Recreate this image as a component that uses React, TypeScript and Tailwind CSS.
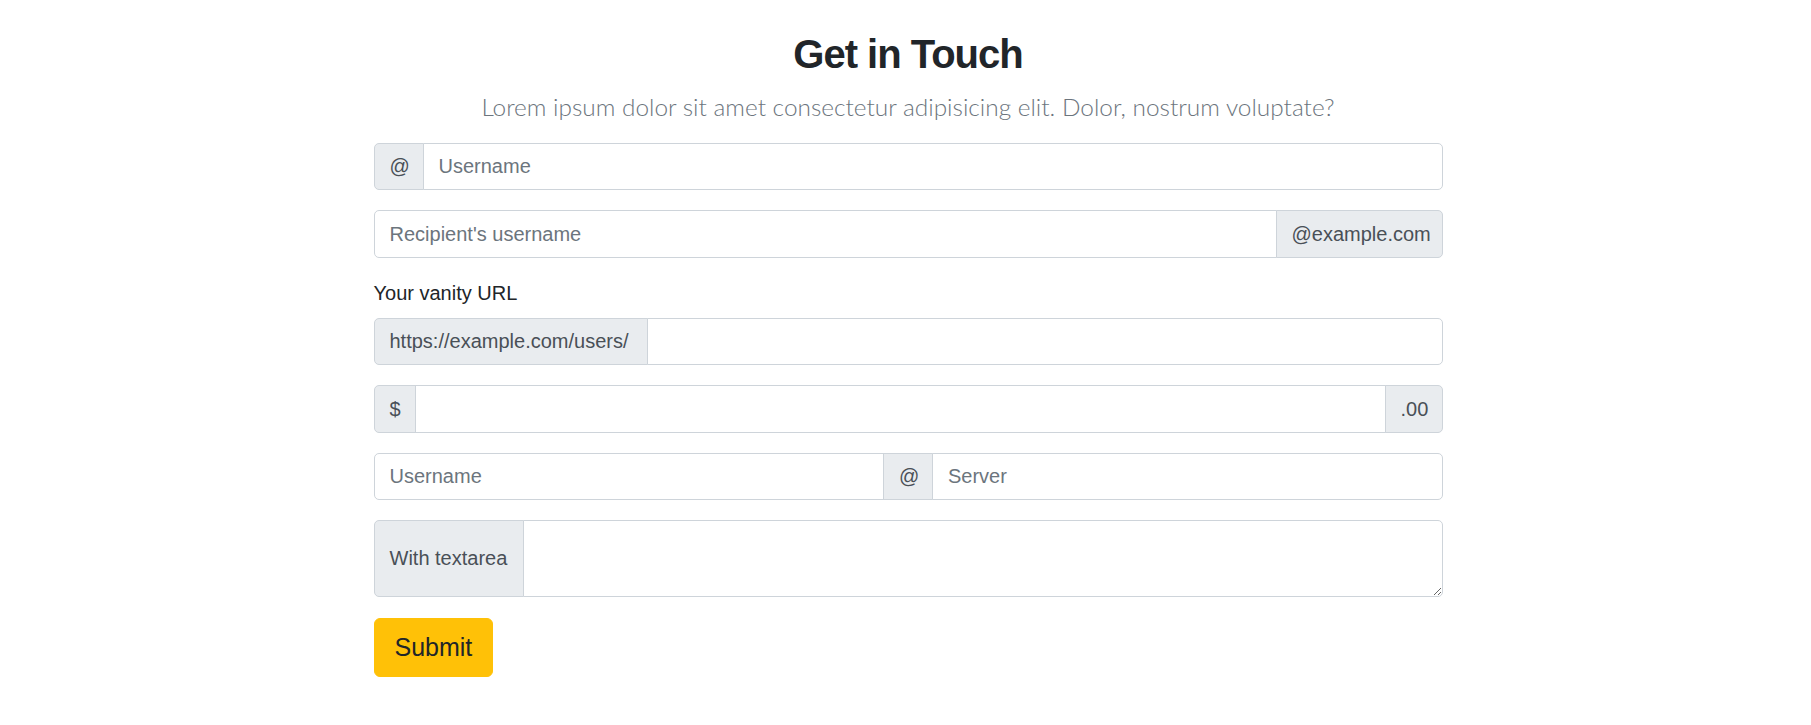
import React from "react";

const groupText =
  "flex items-center shrink-0 bg-[#e9ecef] border border-[#ced4da] text-[#495057] text-[20px] leading-[30px] px-[15px] whitespace-nowrap";
const inputCls =
  "flex-1 min-w-0 bg-white border border-[#ced4da] text-[#495057] text-[20px] leading-[30px] px-[15px] py-[7.5px] outline-none placeholder:text-[#6c757d]";

export default function App() {
  return (
    <div className="min-h-screen bg-white font-['Liberation_Sans',Arial,sans-serif] text-[#212529]">
      <div className="flex justify-center pl-[5px] pt-[30px]">
        <div className="w-[1069px]">
          <h2 className="text-center text-[40px] leading-[1.2] font-bold tracking-[-1px] mb-[10px]">
            Get in Touch
          </h2>
          <p className="text-center font-['Lato',sans-serif] text-[24.4px] leading-[37.5px] font-light text-[#6c757d] mb-[17px]">
            Lorem ipsum dolor sit amet consectetur adipisicing elit. Dolor, nostrum voluptate?
          </p>

          <form onSubmit={(e) => e.preventDefault()}>
            {/* @ username */}
            <div className="flex h-[47.5px] mb-[20px]">
              <span className={`${groupText} w-[50px] rounded-l-[5px]`}>@</span>
              <input className={`${inputCls} -ml-px rounded-r-[5px]`} placeholder="Username" />
            </div>

            {/* recipient */}
            <div className="flex h-[47.5px] mb-[20px]">
              <input className={`${inputCls} rounded-l-[5px]`} placeholder="Recipient's username" />
              <span className={`${groupText} w-[167px] -ml-px rounded-r-[5px]`}>@example.com</span>
            </div>

            <label className="block text-[20px] leading-[30px] mb-[10px]">Your vanity URL</label>
            <div className="flex h-[47.5px] mb-[20px]">
              <span className={`${groupText} w-[274px] rounded-l-[5px]`}>https://example.com/users/</span>
              <input className={`${inputCls} -ml-px rounded-r-[5px]`} />
            </div>

            {/* amount */}
            <div className="flex h-[47.5px] mb-[20px]">
              <span className={`${groupText} w-[42px] rounded-l-[5px]`}>$</span>
              <input className={`${inputCls} -ml-px`} />
              <span className={`${groupText} w-[58px] -ml-px rounded-r-[5px]`}>.00</span>
            </div>

            {/* user @ server */}
            <div className="flex h-[47.5px] mb-[20px]">
              <input className={`${inputCls} rounded-l-[5px]`} placeholder="Username" />
              <span className={`${groupText} w-[50px] -ml-px`}>@</span>
              <input className={`${inputCls} -ml-px rounded-r-[5px]`} placeholder="Server" />
            </div>

            <div className="flex h-[76.5px] mb-[21px]">
              <span className={`${groupText} w-[150px] rounded-l-[5px]`}>With textarea</span>
              <textarea className={`${inputCls} -ml-px rounded-r-[5px] h-full`} />
            </div>

            <button
              type="submit"
              className="bg-[#ffc107] border border-[#ffc107] text-[#212529] text-[25px] leading-[1.5] px-[20px] py-[10px] rounded-[6px]"
            >
              Submit
            </button>
          </form>
        </div>
      </div>
    </div>
  );
}
